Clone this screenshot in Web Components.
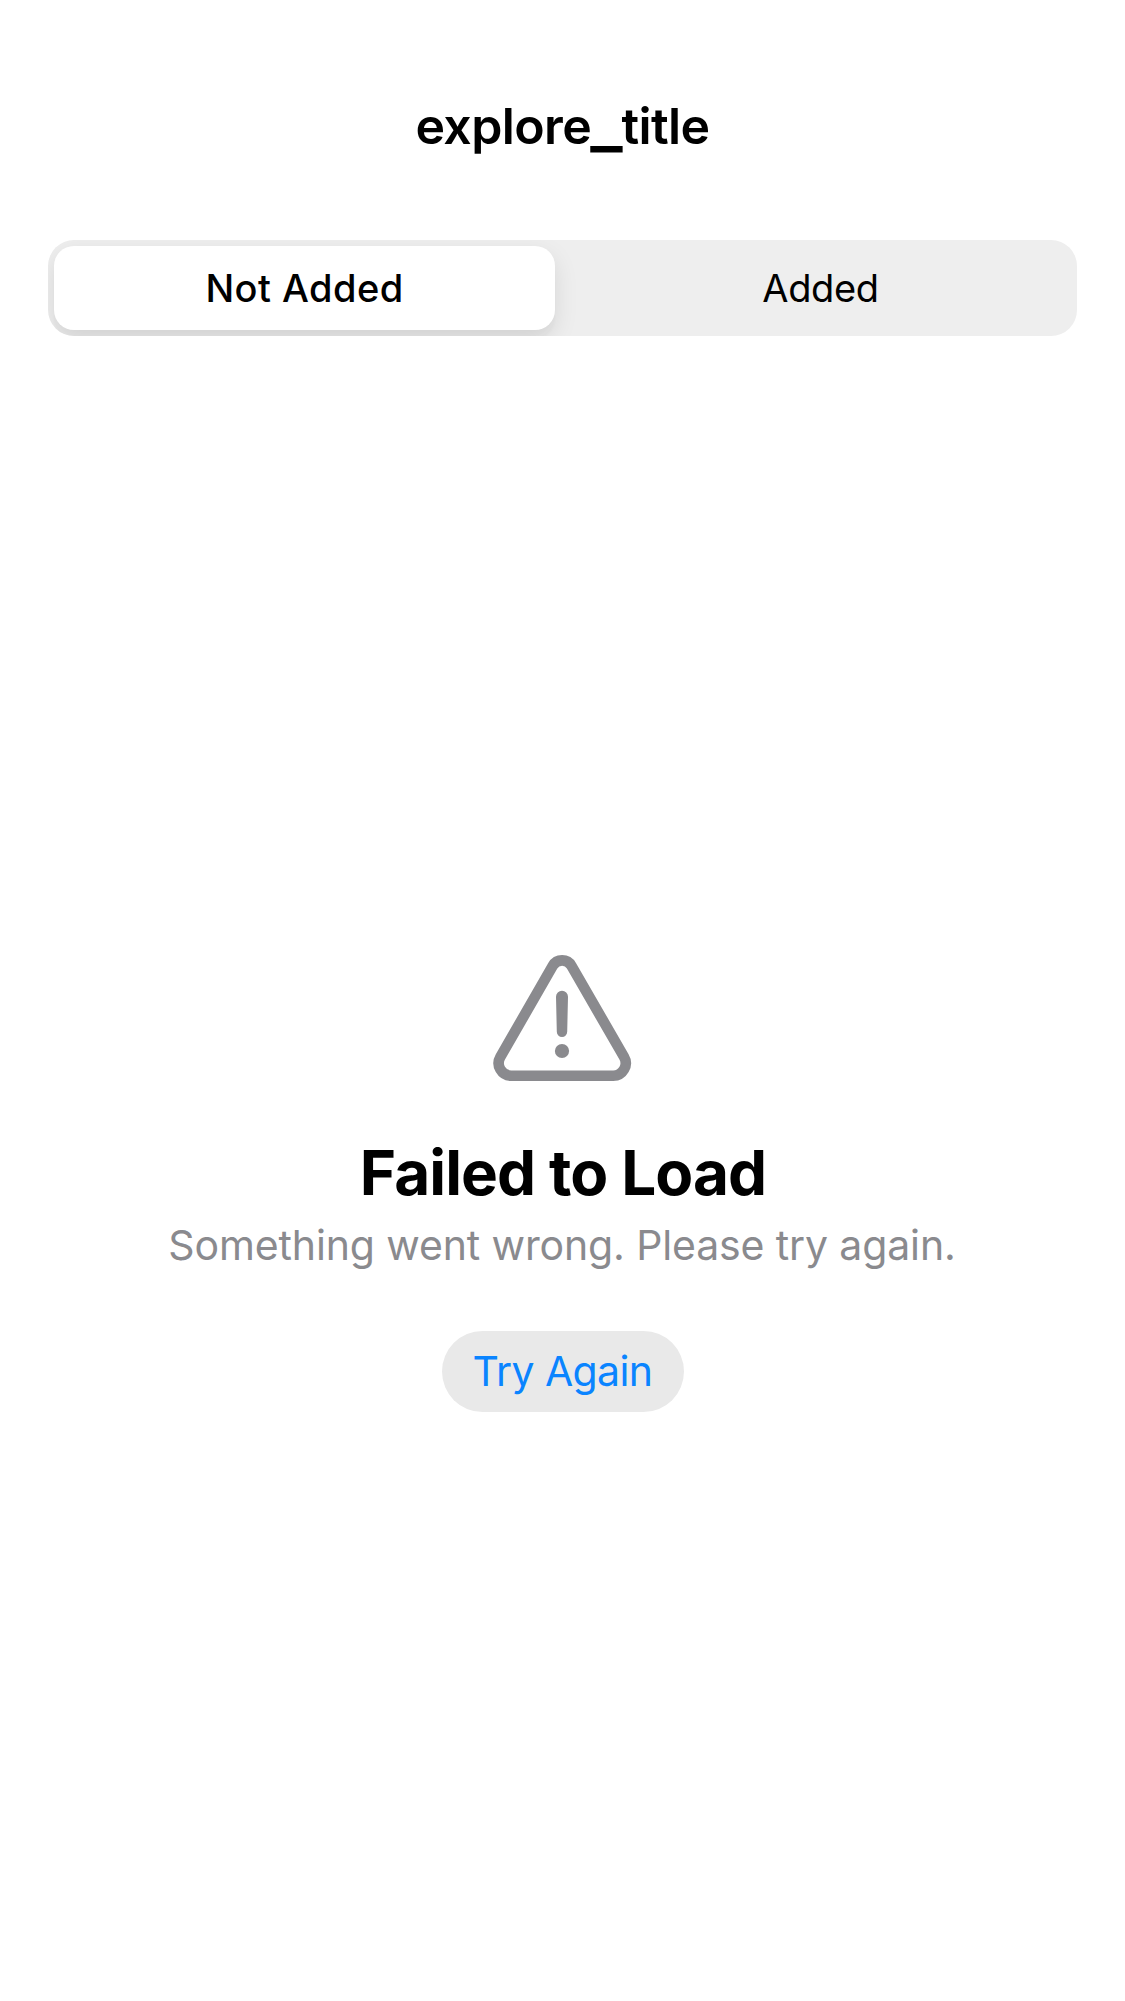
<!DOCTYPE html>
<html lang="en">
<head>
<meta charset="utf-8">
<meta name="viewport" content="width=device-width">
<title>Explore</title>
<style>
html, body { margin: 0; background: #fff; }
body { font-family: Inter, "Liberation Sans", sans-serif; color: #000; }
</style>
</head>
<body>
<explore-screen>
  <nav-title slot="header">explore<span>_</span>title</nav-title>
  <segmented-control slot="header">
    <segment-item selected>Not Added</segment-item>
    <segment-item>Added</segment-item>
  </segmented-control>
  <unavailable-view>
    <warning-icon slot="icon"></warning-icon>
    <span slot="title">Failed to Load</span>
    <span slot="message">Something went wrong. Please try again.</span>
    <pill-button slot="action">Try Again</pill-button>
  </unavailable-view>
</explore-screen>
<script>
const define = (name, html) => {
  const template = document.createElement('template');
  template.innerHTML = html;
  customElements.define(name, class extends HTMLElement {
    constructor() {
      super();
      this.attachShadow({ mode: 'open' }).append(template.content.cloneNode(true));
    }
  });
};

define('explore-screen', `
  <style>
    :host { display: flex; flex-direction: column; box-sizing: border-box; height: 2001px; background: #fff; overflow: hidden; }
    header { display: flex; flex-direction: column; gap: 49px; padding: 60px 48px 0; }
    main { flex: 1; display: flex; justify-content: center; align-items: center; padding-top: 30px; }
  </style>
  <header><slot name="header"></slot></header>
  <main><slot></slot></main>`);

define('nav-title', `
  <style>
    :host { display: block; height: 131px; line-height: 133px; text-align: center; font-size: 50px; font-weight: 600; letter-spacing: -.6px; }
    ::slotted(span) { font-size: 70px; font-weight: 500; line-height: 0; letter-spacing: -1.2px; margin-left: -1px; vertical-align: -2px; }
  </style>
  <slot></slot>`);

define('segmented-control', `
  <style>
    :host { display: grid; grid-template-columns: 1fr 1fr; gap: 15px; box-sizing: border-box; height: 96px; padding: 6px; border-radius: 26px; background: #eeeeee; overflow: hidden; }
  </style>
  <slot></slot>`);

define('segment-item', `
  <style>
    :host { display: flex; align-items: center; justify-content: center; height: 84px; border-radius: 20px; font-size: 38px; line-height: 84px; letter-spacing: -.377px; }
    :host([selected]) { background: #fff; font-weight: 500; letter-spacing: .45px; box-shadow: 0 9px 24px rgba(0,0,0,.1), 0 9px 3px rgba(0,0,0,.02); }
  </style>
  <slot></slot>`);

define('unavailable-view', `
  <style>
    :host { display: flex; flex-direction: column; align-items: center; }
    .title { margin-top: 52px; line-height: 77px; font-size: 62px; font-weight: 700; letter-spacing: -.9px; white-space: nowrap; padding-left: 1px; }
    .message { margin-top: 6px; line-height: 56px; font-size: 41px; letter-spacing: -.13px; color: #8a8a8e; white-space: nowrap; padding-right: 1px; }
    .action { margin-top: 58px; }
  </style>
  <slot name="icon"></slot>
  <div class="title"><slot name="title"></slot></div>
  <div class="message"><slot name="message"></slot></div>
  <div class="action"><slot name="action"></slot></div>`);

define('warning-icon', `
  <style>
    :host { display: block; width: 139px; height: 127px; color: #8a8a8e; }
    svg { display: block; }
  </style>
  <svg width="139" height="127" viewBox="493 955 139 127" aria-hidden="true">
    <path d="M552.7 965.9 L500.4 1056.9 A12.5 12.5 0 0 0 511.2 1075.7 H613.2 A12.5 12.5 0 0 0 624 1056.9 L571.5 965.9 A10.8 10.8 0 0 0 552.7 965.9 Z" fill="none" stroke="currentColor" stroke-width="10.6"/>
    <path d="M556 996.7 A6 6 0 0 1 568 996.7 L567.2 1031.8 A5.2 5.2 0 0 1 556.8 1031.8 Z" fill="currentColor"/>
    <circle cx="562" cy="1051" r="7.1" fill="currentColor"/>
  </svg>`);

define('pill-button', `
  <style>
    :host { display: flex; align-items: center; justify-content: center; width: 242px; height: 81px; border-radius: 41px; background: #e9e9e9; color: #0a84ff; font-size: 41px; line-height: 81px; letter-spacing: -.6px; }
  </style>
  <slot></slot>`);
</script>
</body>
</html>
